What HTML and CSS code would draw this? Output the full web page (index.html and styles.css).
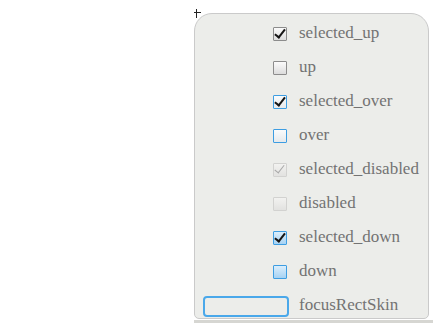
FILE: index.html
```html
<!DOCTYPE html>
<html>
<head>
  <title>CheckBox skin parts</title>
  <link rel="stylesheet" href="styles.css">
</head>
<body>
  <div class="stage">
    <div class="mark"></div>
    <div class="panel">
      <div class="row">
        <div class="icon"><span class="box up checked"></span></div>
        <span class="label">selected_up</span>
      </div>
      <div class="row">
        <div class="icon"><span class="box up"></span></div>
        <span class="label">up</span>
      </div>
      <div class="row">
        <div class="icon"><span class="box over checked"></span></div>
        <span class="label">selected_over</span>
      </div>
      <div class="row">
        <div class="icon"><span class="box over"></span></div>
        <span class="label">over</span>
      </div>
      <div class="row">
        <div class="icon"><span class="box disabled checked"></span></div>
        <span class="label">selected_disabled</span>
      </div>
      <div class="row">
        <div class="icon"><span class="box disabled"></span></div>
        <span class="label">disabled</span>
      </div>
      <div class="row">
        <div class="icon"><span class="box down checked"></span></div>
        <span class="label">selected_down</span>
      </div>
      <div class="row">
        <div class="icon"><span class="box down"></span></div>
        <span class="label">down</span>
      </div>
      <div class="row">
        <div class="icon"><span class="focus-rect"></span></div>
        <span class="label">focusRectSkin</span>
      </div>
    </div>
    <div class="strip"></div>
  </div>
</body>
</html>
```

FILE: styles.css
```css
html, body {
  margin: 0;
  background-color: #ffffff;
}

.stage {
  position: relative;
  display: flex;
  flex-direction: column;
  padding: 13px 0 0 194px;
  height: 310px;
  overflow: hidden;
}

/* little registration cross on the panel corner */
.mark {
  position: absolute;
  left: 194px;
  top: 9px;
  width: 7px;
  height: 9px;
}

.mark::before {
  content: "";
  position: absolute;
  left: 2px;
  top: 0;
  width: 1px;
  height: 9px;
  background-color: #222;
}

.mark::after {
  content: "";
  position: absolute;
  left: 0;
  top: 3px;
  width: 7px;
  height: 1px;
  background-color: #222;
}

.panel {
  flex-shrink: 0;
  width: 233px;
  height: 301px;
  padding-top: 3px;
  background-color: #ecedea;
  border: 1px solid #cacaca;
  border-radius: 18px 18px 5px 5px;
  display: flex;
  flex-direction: column;
}

.row {
  flex-shrink: 0;
  height: 34px;
  display: flex;
  align-items: center;
  gap: 11px;
}

.icon {
  width: 93px;
  display: flex;
  justify-content: flex-end;
}

.label {
  font-family: "Liberation Serif", "Times New Roman", serif;
  font-size: 17px;
  color: #737373;
  line-height: 20px;
  margin-top: -2px;
}

.box {
  position: relative;
  width: 12px;
  height: 12px;
  margin-right: 1px;
  border: 1px solid #8c8c8c;
  border-radius: 1px;
  background: linear-gradient(#fbfbfb, #dcdcdc);
}

.box.over {
  border-color: #3d9de2;
  background: linear-gradient(#fafbfc, #e6e9ec);
}

.box.down {
  border-color: #3d9de2;
  background: linear-gradient(#dbeefc, #a6d2f3);
}

.box.disabled {
  border-color: #d2d2d0;
  background: linear-gradient(#f2f2f0, #e2e2e0);
}

.box.checked::after {
  content: "";
  position: absolute;
  left: 3px;
  top: -1px;
  width: 4px;
  height: 9px;
  border-right: 2.5px solid #151515;
  border-bottom: 2.5px solid #151515;
  transform: rotate(38deg);
}

.box.disabled.checked::after {
  border-right: 1.5px solid #a8a8a8;
  border-bottom: 1.5px solid #a8a8a8;
}

.focus-rect {
  width: 82px;
  height: 17px;
  border: 2px solid #4aa8ea;
  border-radius: 4px;
  margin-right: -1px;
}

.strip {
  flex-shrink: 0;
  width: 239px;
  height: 5px;
  margin-top: 1px;
  background-color: #d6d6d2;
}
```
